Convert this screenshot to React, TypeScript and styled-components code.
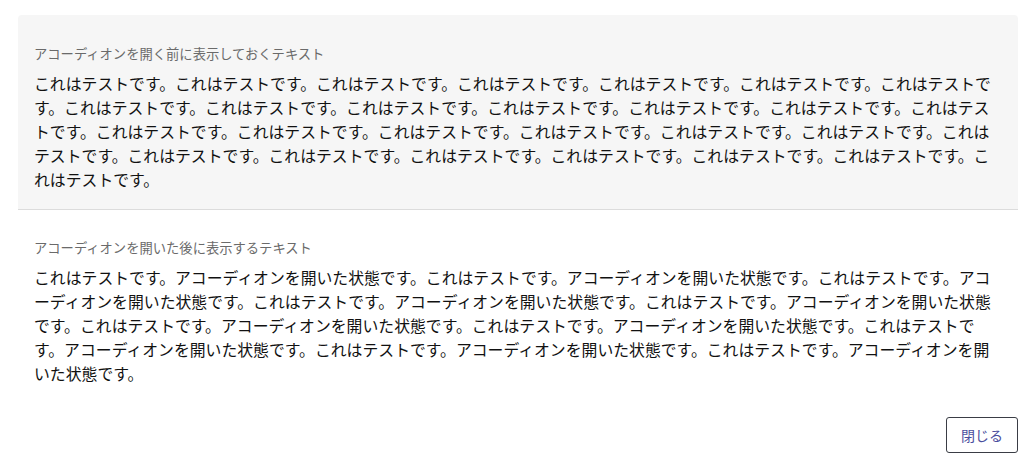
import React from "react";
import styled, { createGlobalStyle } from "styled-components";

const GlobalStyle = createGlobalStyle`
  html, body {
    margin: 0;
    padding: 0;
    background: #ffffff;
  }
  body {
    font-family: "Noto Sans CJK JP", "Noto Sans", sans-serif;
    color: #111111;
  }
`;

const Page = styled.div`
  padding: 15px 9px 0 18px;
  display: flex;
  flex-direction: column;
`;

const Section = styled.section<{ $collapsed?: boolean }>`
  background: ${(p) => (p.$collapsed ? "#f6f6f6" : "#ffffff")};
  border-radius: ${(p) => (p.$collapsed ? "4px 4px 0 0" : "0")};
  border-bottom: ${(p) => (p.$collapsed ? "1px solid #dcdcdc" : "none")};
  padding: ${(p) => (p.$collapsed ? "29px 16px 17px 16px" : "28px 16px 0 16px")};
  display: flex;
  flex-direction: column;
  gap: 8px;
`;

const Label = styled.div`
  font-size: 13.3px;
  line-height: 20px;
  color: #6a6a6a;
`;

const Body = styled.p`
  margin: 0;
  font-size: 15.85px;
  line-height: 24px;
  color: #111111;
`;

const Footer = styled.div`
  display: flex;
  justify-content: flex-end;
  padding-top: 31px;
`;

const CloseButton = styled.button`
  width: 72px;
  height: 36px;
  background: #ffffff;
  border: 1px solid #3a3d45;
  border-radius: 3px;
  color: #4b4f9e;
  font-family: "Noto Sans CJK JP", "Noto Sans", sans-serif;
  font-size: 14px;
  padding: 0;
  cursor: pointer;
`;

const before = "これはテストです。".repeat(28);
const after = "これはテストです。アコーディオンを開いた状態です。".repeat(10);

export default function App() {
  return (
    <>
      <GlobalStyle />
      <Page lang="ja">
        <Section $collapsed>
          <Label>アコーディオンを開く前に表示しておくテキスト</Label>
          <Body>{before}</Body>
        </Section>
        <Section>
          <Label>アコーディオンを開いた後に表示するテキスト</Label>
          <Body>{after}</Body>
        </Section>
        <Footer>
          <CloseButton type="button">閉じる</CloseButton>
        </Footer>
      </Page>
    </>
  );
}
